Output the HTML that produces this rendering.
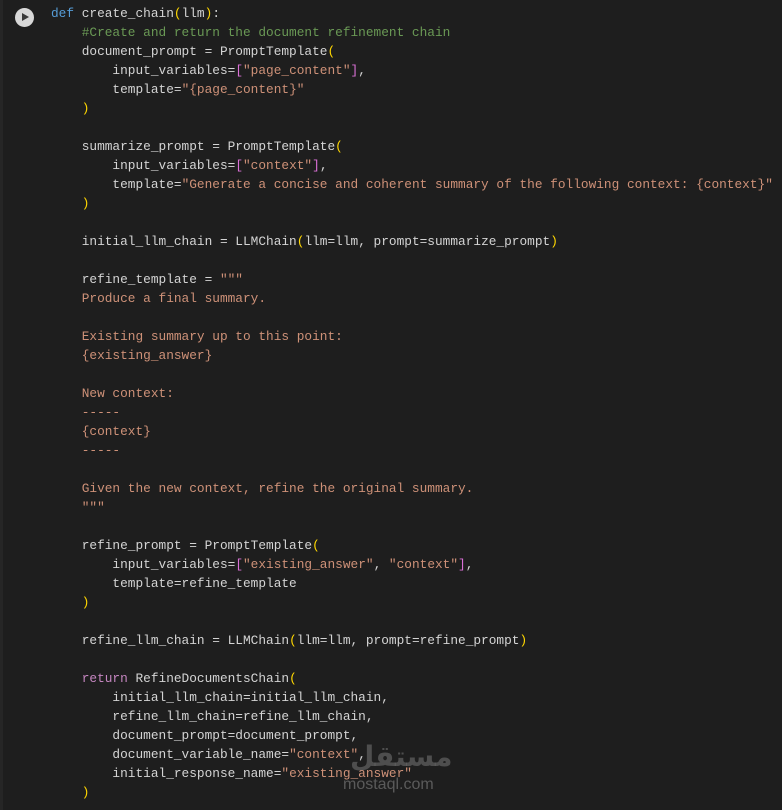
<!DOCTYPE html>
<html><head><meta charset="utf-8"><style>
html,body{margin:0;padding:0;background:#1e1e1e;width:782px;height:810px;overflow:hidden}
.wrap{position:relative;width:782px;height:810px;background:#1e1e1e}
.bl{position:absolute;left:0;top:0;width:3px;height:810px;background:#262626}
pre{position:absolute;left:51px;top:4px;margin:0;font-family:"Liberation Mono",monospace;font-size:12.8px;line-height:19px;color:#d4d4d4;white-space:pre}
.k{color:#569cd6}.c{color:#6a9955}.s{color:#ce9178}.y{color:#ffd700}.m{color:#da70d6}.r{color:#c586c0}
.play{position:absolute;left:15px;top:8px;width:19px;height:19px;border-radius:50%;background:#d8d8d8}
.play:after{content:"";position:absolute;left:7px;top:5px;border-left:7px solid #3a3a3a;border-top:4.5px solid transparent;border-bottom:4.5px solid transparent}
.wm1{position:absolute;left:350px;top:740px;font-family:"DejaVu Sans",sans-serif;font-size:28px;font-weight:bold;color:rgba(150,150,150,0.4)}
.wm2{position:absolute;left:343px;top:776px;font-family:"Liberation Sans",sans-serif;font-size:16px;color:rgba(150,150,150,0.5)}
</style></head><body><div class="wrap"><div class="bl"></div><div class="play"></div>
<pre><span class="k">def</span> create_chain<span class="y">(</span>llm<span class="y">)</span>:
    <span class="c">#Create and return the document refinement chain</span>
    document_prompt = PromptTemplate<span class="y">(</span>
        input_variables=<span class="m">[</span><span class="s">"page_content"</span><span class="m">]</span>,
        template=<span class="s">"{page_content}"</span>
    <span class="y">)</span>

    summarize_prompt = PromptTemplate<span class="y">(</span>
        input_variables=<span class="m">[</span><span class="s">"context"</span><span class="m">]</span>,
        template=<span class="s">"Generate a concise and coherent summary of the following context: {context}"</span>
    <span class="y">)</span>

    initial_llm_chain = LLMChain<span class="y">(</span>llm=llm, prompt=summarize_prompt<span class="y">)</span>

    refine_template = <span class="s">"""
    Produce a final summary.

    Existing summary up to this point:
    {existing_answer}

    New context:
    -----
    {context}
    -----

    Given the new context, refine the original summary.
    """</span>

    refine_prompt = PromptTemplate<span class="y">(</span>
        input_variables=<span class="m">[</span><span class="s">"existing_answer"</span>, <span class="s">"context"</span><span class="m">]</span>,
        template=refine_template
    <span class="y">)</span>

    refine_llm_chain = LLMChain<span class="y">(</span>llm=llm, prompt=refine_prompt<span class="y">)</span>

    <span class="r">return</span> RefineDocumentsChain<span class="y">(</span>
        initial_llm_chain=initial_llm_chain,
        refine_llm_chain=refine_llm_chain,
        document_prompt=document_prompt,
        document_variable_name=<span class="s">"context"</span>,
        initial_response_name=<span class="s">"existing_answer"</span>
    <span class="y">)</span></pre>
<div class="wm1">مستقل</div><div class="wm2">mostaql.com</div>
</div></body></html>
